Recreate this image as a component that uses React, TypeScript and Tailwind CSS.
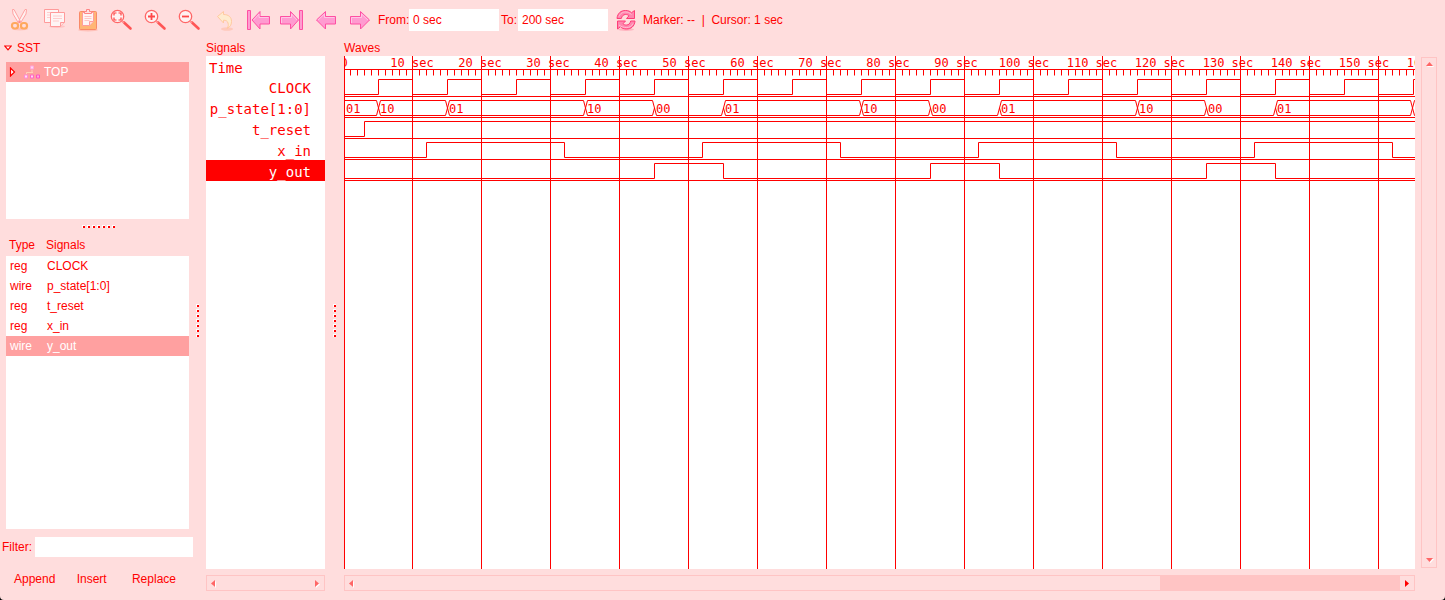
import type { ReactNode } from "react";

const RED = "#ff0000";

/* ---------- toolbar icons ---------- */

function Glyph({ children }: { children: ReactNode }) {
  return (
    <svg viewBox="0 0 24 24" className="size-6" fill="none" aria-hidden="true">
      {children}
    </svg>
  );
}

const Cut = () => (
  <Glyph>
    <ellipse cx="12" cy="21" rx="8" ry="1.5" fill="#ffc4bc" />
    <path d="M4.5 1.5L5 6l5.500 9 2-1.500L6 1.500zM18.500 1.500L18 6l-5.500 9-2-1.500L17 1.500z" fill="#fff2f0" stroke="#ffa3a3" strokeWidth="1" />
    <rect x="4" y="15" width="6" height="5.500" rx="2.500" stroke="#ffa95e" strokeWidth="2.200" />
    <rect x="13" y="15" width="6" height="5.500" rx="2.500" stroke="#ffa95e" strokeWidth="2.200" />
    <circle cx="11.500" cy="14" r="1" fill="#ff8a8a" />
  </Glyph>
);

const Copy = () => (
  <Glyph>
    <ellipse cx="15" cy="18.500" rx="8" ry="1.500" fill="#ffc4c4" />
    <path d="M2.500 1.500h14v13h-14z" fill="#fff5f5" stroke="#ff9a9a" />
    <path d="M5 4.500h8M5 7h4M5 9.500h4" stroke="#ffcccc" />
    <path d="M8.500 4.500h14v10l-4 4h-10z" fill="#fff5f5" stroke="#ff9a9a" />
    <path d="M22.500 14.500h-4v4" fill="#ffdcdc" stroke="#ff9a9a" />
    <path d="M11 8h9M11 10.500h9M11 13h6" stroke="#ffcccc" />
  </Glyph>
);

const Paste = () => (
  <Glyph>
    <ellipse cx="12" cy="22" rx="10" ry="1.500" fill="#ffc0b8" />
    <rect x="3.500" y="3.500" width="17" height="18" rx="1" fill="#ffb676" stroke="#f98a68" />
    <path d="M6.500 4.500h11v9l-4 4h-7z" fill="#fff4f4" stroke="#ff9c9c" />
    <path d="M17.500 13.500h-4v4" fill="#ffdada" stroke="#ff9c9c" />
    <path d="M8.500 8.500h7M8.500 10.500h7M8.500 12.500h5" stroke="#ffc6c6" />
    <path d="M8.500 5.500v-2h2v-2h3v2h2v2z" fill="#ffe0e0" stroke="#ff8585" />
  </Glyph>
);

function Zoom({ children }: { children: ReactNode }) {
  return (
    <Glyph>
      <path d="M14 14.500l6.500 6" stroke="#ff5555" strokeWidth="2.600" strokeLinecap="round" />
      <path d="M12 13.500l2 1.500" stroke="#ff8f8f" strokeWidth="1.500" />
      <circle cx="7.500" cy="8.500" r="6.200" fill="#fff1f1" stroke="#ff6666" strokeWidth="1.300" />
      {children}
    </Glyph>
  );
}

const ZoomFit = () => (
  <Zoom>
    <path d="M4 7.500V5h2.500M8.500 5H11v2.500M11 9.500V12H8.500M6.500 12H4V9.500" stroke="#ff4040" strokeWidth="1.200" />
  </Zoom>
);
const ZoomIn = () => (
  <Zoom>
    <path d="M4 8.500h7M7.500 5v7" stroke="#ff4848" strokeWidth="1.800" />
  </Zoom>
);
const ZoomOut = () => (
  <Zoom>
    <path d="M4 8.500h7" stroke="#ff4848" strokeWidth="1.800" />
  </Zoom>
);

const Undo = () => (
  <Glyph>
    <ellipse cx="15" cy="21" rx="6" ry="1.800" fill="#ffc9bc" />
    <path d="M5.500 8.500l6-5v3c5 0 8 2.500 8 7 0 3.500-1.500 5.500-4.500 7 1.500-2 1.500-3.500 1-5.500-.500-2-2-2.800-4.500-2.800v2.800z" fill="#ffebcf" stroke="#ffc9a0" strokeLinejoin="round" />
  </Glyph>
);

const pinkProps = { fill: "#ff9bd0", stroke: "#ff4fa3", strokeLinejoin: "round" as const };
const shine = "#ffc6e4";

const First = () => (
  <Glyph>
    <path d="M1.500 2.500h3v19h-3z" {...pinkProps} />
    <path d="M6 12l8-8.500v5h9.500v7.500H14v5z" {...pinkProps} />
    <path d="M7.500 12L13 6v3.500h9.500" stroke={shine} />
  </Glyph>
);
const Last = () => (
  <Glyph>
    <path d="M19.500 2.500h3v19h-3z" {...pinkProps} />
    <path d="M18.500 12l-8-8.500v5H.500v7.500h10v5z" {...pinkProps} />
    <path d="M1.500 15V9.500h10V6l5.500 6" stroke={shine} />
  </Glyph>
);
const Prev = () => (
  <Glyph>
    <path d="M2.500 12l9-8.500v5h10v7.500h-10v5z" {...pinkProps} />
    <path d="M4 12l6.500-6v3.500h10" stroke={shine} />
  </Glyph>
);
const Next = () => (
  <Glyph>
    <path d="M21.500 12l-9-8.500v5h-10v7.500h10v5z" {...pinkProps} />
    <path d="M3.500 15V9.500h10V6l6.500 6" stroke={shine} />
  </Glyph>
);
const Reload = () => (
  <Glyph>
    <ellipse cx="12" cy="21.500" rx="8" ry="1.500" fill="#ffb5c0" />
    <path d="M3 10.500C3.500 5 7 2.500 11.500 2.500c2.500 0 4.500.700 6 2.200L20.500 2.500v8H12.500l2.500-2.700c-1-1-2-1.300-3.500-1.300-2.300 0-3.500 1.500-4.200 4z" fill="#ff86ae" stroke="#ff3d78" strokeLinejoin="round" />
    <path d="M21 13c-.500 5.500-4 8-8.500 8-2.500 0-4.500-.700-6-2.200L3.500 21v-8h8L9 15.700c1 1 2 1.300 3.500 1.300 2.300 0 3.500-1.500 4.200-4z" fill="#ff86ae" stroke="#ff3d78" strokeLinejoin="round" />
    <path d="M5 8.500C6.500 5 9 4 11.500 4c2.500 0 4 .800 6 2.500M5 17c2.500 2 5 2.500 7.500 2.500 3 0 5-1 6.500-4" stroke="#ffbfd2" />
  </Glyph>
);

const TOOLS = [
  { label: "Cut", Icon: Cut },
  { label: "Copy", Icon: Copy },
  { label: "Paste", Icon: Paste },
  { label: "Zoom fit", Icon: ZoomFit },
  { label: "Zoom in", Icon: ZoomIn },
  { label: "Zoom out", Icon: ZoomOut },
  { label: "Undo zoom", Icon: Undo },
  { label: "Zoom to start", Icon: First },
  { label: "Zoom to end", Icon: Last },
  { label: "Previous edge", Icon: Prev },
  { label: "Next edge", Icon: Next },
];

function Toolbar() {
  return (
    <header className="flex h-10 shrink-0 items-center pl-[3px]">
      {TOOLS.map(({ label, Icon }) => (
        <button key={label} type="button" aria-label={label} className="flex h-10 w-[34px] shrink-0 items-center justify-center">
          <Icon />
        </button>
      ))}
      <label htmlFor="from" className="ml-px w-[31px] shrink-0 whitespace-nowrap">From:</label>
      <input id="from" defaultValue="0 sec" className="h-[22px] w-[90px] bg-white px-1 outline-none" />
      <label htmlFor="to" className="ml-0.5 w-[17px] shrink-0 whitespace-nowrap">To:</label>
      <input id="to" defaultValue="200 sec" className="h-[22px] w-[90px] bg-white px-1 outline-none" />
      <button type="button" aria-label="Reload" className="ml-1.5 flex shrink-0 items-center">
        <Reload />
      </button>
      <p className="ml-[5px] whitespace-pre">Marker: --  |  Cursor: 1 sec</p>
    </header>
  );
}

/* ---------- splitters and scrollbars ---------- */

function Dots({ vertical = false }: { vertical?: boolean }) {
  return (
    <div className={vertical ? "flex flex-col gap-0.5" : "flex gap-0.5"}>
      {Array.from({ length: 7 }, (_, i) => (
        <span key={i} className="size-[3px] border-t border-l border-white bg-[#ff0000]" />
      ))}
    </div>
  );
}

function Arrow({ dir, active = false }: { dir: "left" | "right" | "up" | "down"; active?: boolean }) {
  const paths = { left: "M6 1v7L2 4.500z", right: "M2 1v7l4-3.500z", up: "M1 6h7L4.500 2z", down: "M1 2h7L4.500 6z" };
  return (
    <svg viewBox="0 0 9 9" className="size-[9px]" aria-hidden="true">
      {!active && <path d={paths[dir]} fill="#fff" transform="translate(1 1)" />}
      <path d={paths[dir]} fill={active ? RED : "#ff6666"} />
    </svg>
  );
}

function HScroll({ name, thumb = false }: { name: string; thumb?: boolean }) {
  return (
    <div className="flex h-4 items-stretch border border-[#ffc4c4]">
      <button type="button" aria-label={`${name} left`} className="flex w-3 items-center justify-center">
        <Arrow dir="left" />
      </button>
      <div className="flex flex-1 justify-end">{thumb && <div className="w-[23%] bg-[#ffc4c4]" />}</div>
      <button type="button" aria-label={`${name} right`} className="flex w-3.5 items-center justify-center">
        <Arrow dir="right" active={thumb} />
      </button>
    </div>
  );
}

/* ---------- left panel ---------- */

const VARS = [
  ["reg", "CLOCK"],
  ["wire", "p_state[1:0]"],
  ["reg", "t_reset"],
  ["reg", "x_in"],
  ["wire", "y_out"],
];

function Sidebar() {
  return (
    <aside className="flex w-[193px] shrink-0 flex-col">
      <button type="button" className="flex h-4 items-center gap-[5px] pl-1">
        <svg viewBox="0 0 8 6" className="h-1.5 w-2" fill="#fff" stroke={RED} strokeWidth="1.200" aria-hidden="true">
          <path d="M.700 1h6.600L4 4.800z" />
        </svg>
        SST
      </button>
      <div className="mt-1.5 mr-1 ml-1.5 h-[157px] bg-white">
        <div className="flex h-5 items-center bg-[#ffa0a0] pl-[3px] text-white">
          <svg viewBox="0 0 8 10" className="h-2.5 w-2" fill="#fff" stroke={RED} strokeWidth="1.200" aria-hidden="true">
            <path d="M1.500 1v8l4-4z" />
          </svg>
          <svg viewBox="0 0 16 14" className="mr-1 ml-[7px] h-3.5 w-4" aria-hidden="true">
            <path d="M8 5v2M2.500 9V7.500H9" stroke="#ffd0b8" fill="none" />
            <path d="M6.500 1h3v3h-3z" fill="#ffd8f0" stroke="#ffa4dc" />
            <path d="M.500 10h3v3h-3z" fill="#ffe0f6" stroke="#ff8ad8" />
            <path d="M6.500 10h3v3h-3z" fill="#ffd8f2" stroke="#ff66c8" />
            <path d="M12.500 10h3v3h-3z" fill="#ffa6e2" stroke="#ff52c0" />
          </svg>
          TOP
        </div>
      </div>
      <div className="flex h-[15px] items-center justify-center pl-1">
        <Dots />
      </div>
      <div className="mr-1 ml-1.5 flex min-h-0 flex-1 flex-col">
        <table className="w-full table-fixed border-collapse text-left">
          <colgroup>
            <col className="w-[38px]" />
            <col />
          </colgroup>
          <thead>
            <tr className="h-[22px]">
              <th className="p-0 pl-[3px] font-normal">Type</th>
              <th className="p-0 pl-0.5 font-normal">Signals</th>
            </tr>
          </thead>
          <tbody className="bg-white">
            {VARS.map(([type, name]) => (
              <tr key={name} className={name === "y_out" ? "h-5 bg-[#ffa0a0] text-white" : "h-5"}>
                <td className="p-0 pl-1">{type}</td>
                <td className="p-0 pl-[3px]">{name}</td>
              </tr>
            ))}
          </tbody>
        </table>
        <div className="flex-1 bg-white" />
      </div>
      <div className="mt-2 flex h-5 items-center pl-0.5">
        <label htmlFor="filter" className="w-[33px] shrink-0">Filter:</label>
        <input id="filter" className="h-5 min-w-0 flex-1 bg-white px-1 outline-none" />
      </div>
      <div className="mt-3 mb-[11px] flex h-5 items-center justify-between pr-[17px] pl-3.5">
        <button type="button">Append</button>
        <button type="button" className="mr-1">Insert</button>
        <button type="button">Replace</button>
      </div>
    </aside>
  );
}

/* ---------- signal names ---------- */

const SIGNALS = ["CLOCK", "p_state[1:0]", "t_reset", "x_in", "y_out"];

function SignalNames() {
  return (
    <section className="flex w-[119px] shrink-0 flex-col pb-[9px]">
      <h2 className="h-4 leading-4">Signals</h2>
      <div className="mb-1.5 flex-1 bg-white font-['DejaVu_Sans_Mono',monospace] text-sm">
        <div className="h-5 pl-[3px] leading-6">Time</div>
        <ul>
          {SIGNALS.map((s) => (
            <li
              key={s}
              className={
                s === "y_out"
                  ? "h-[21px] bg-[#ff0000] pr-3.5 text-right leading-6 text-white"
                  : "h-[21px] pr-3.5 text-right leading-6"
              }
            >
              {s}
            </li>
          ))}
        </ul>
      </div>
      <HScroll name="Scroll signals" />
    </section>
  );
}

/* ---------- waveforms ---------- */

const END = 4000;
const COUNT = 60;
const LABELS = 17;
const at = (sec: number) => (sec === 0 ? 0 : Math.floor(sec * 6.9) - (sec % 10 === 0 ? 1 : 0));

function squarePath(edges: number[], y: number, startHigh = false) {
  let high = startHigh;
  let d = `M0 ${high ? y : y + 15}`;
  for (const x of edges) {
    d += `H${x}`;
    high = !high;
    d += `V${high ? y : y + 15}`;
  }
  return d + `H${END}`;
}

const CLOCK_EDGES = Array.from({ length: COUNT }, (_, k) => [34 + 69 * k, 68 + 69 * k]).flat();
const X_EDGES = Array.from({ length: 12 }, (_, k) => 82 + 138 * k);
const Y_EDGES = [310, 379, 586, 655, 862, 931];

const BUS: [number, string][] = [
  [0, "01"],
  [34, "10"],
  [103, "01"],
  [241, "10"],
  [310, "00"],
  [379, "01"],
  [517, "10"],
  [586, "00"],
  [655, "01"],
  [793, "10"],
  [862, "00"],
  [931, "01"],
  [1068, "10"],
];

const TOP = 44;
const BOTTOM = 59;

function busPath() {
  let d = "";
  BUS.forEach(([x, v], i) => {
    const next = i + 1 < BUS.length ? BUS[i + 1][0] : END;
    const from = i === 0 ? x : x + 2;
    d += `M${from} ${BOTTOM}H${next - 2}`;
    if (v !== "00") d += `M${from} ${TOP}H${next - 2}`;
  });
  return d;
}

function crossingPath() {
  let d = "";
  for (let i = 1; i < BUS.length; i++) {
    const x = BUS[i][0];
    const mid = (TOP + BOTTOM) / 2;
    const fromZero = BUS[i - 1][1] === "00";
    const toZero = BUS[i][1] === "00";
    d += fromZero ? `M${x} ${mid}L${x + 2} ${BOTTOM}` : `M${x - 2} ${TOP}L${x + 2} ${BOTTOM}`;
    d += toZero ? `M${x} ${mid}L${x - 2} ${BOTTOM}` : `M${x + 2} ${TOP}L${x - 2} ${BOTTOM}`;
  }
  return d;
}

function WaveCanvas() {
  const ticks = Array.from({ length: 400 }, (_, i) => `M${at(i)} 13v6`).join("");
  const rules = [40, 61, 82, 103, 124].map((y) => `M0 ${y}H${END}`).join("");
  return (
    <svg className="block h-0 min-h-full w-full overflow-hidden bg-white" role="img" aria-label="Waveforms">
      <g transform="translate(0.5 0.5)" stroke={RED} fill="none" strokeWidth="1">
        <path d={`M0 13H${END}`} />
        <path d={ticks} />
        <path d={rules} />
        <path d={squarePath(CLOCK_EDGES, 23)} />
        <path d={busPath()} />
        <path d={crossingPath()} />
        <path d={squarePath([20], 65)} />
        <path d={squarePath(X_EDGES, 86)} />
        <path d={squarePath(Y_EDGES, 107)} />
        {Array.from({ length: COUNT }, (_, k) => (
          <line key={k} x1={at(k * 10)} x2={at(k * 10)} y1="-1" y2="100%" />
        ))}
      </g>
      <g fill={RED} className="font-['DejaVu_Sans_Mono',monospace] text-xs">
        {Array.from({ length: LABELS }, (_, k) => (
          <text key={k} x={68 * k} y="11" textAnchor="middle">
            {k === 0 ? "0" : `${k * 10} sec`}
          </text>
        ))}
        {BUS.slice(0, -1).map(([x, v]) => (
          <text key={x} x={x + 2} y="57">
            {v}
          </text>
        ))}
      </g>
    </svg>
  );
}

function Waves() {
  return (
    <section className="flex min-w-0 flex-1 flex-col pb-[9px]">
      <h2 className="h-4 leading-4">Waves</h2>
      <div className="mb-1.5 flex-1">
        <WaveCanvas />
      </div>
      <HScroll name="Scroll waves" thumb />
    </section>
  );
}

export default function App() {
  return (
    <div className="bg-black">
      <div className="flex h-screen min-h-[420px] flex-col overflow-hidden rounded-b-[4px] bg-[#ffdddd] font-['Liberation_Sans',Arial,sans-serif] text-xs text-[#ff0000]">
        <Toolbar />
        <main className="flex min-h-0 flex-1">
          <Sidebar />
          <div className="flex w-[13px] shrink-0 items-center justify-center pr-[5px]">
            <Dots vertical />
          </div>
          <SignalNames />
          <div className="flex w-[19px] shrink-0 items-center justify-center">
            <Dots vertical />
          </div>
          <Waves />
          <div className="mt-[17px] mr-2 mb-8 ml-1.5 flex w-4 shrink-0 flex-col items-stretch justify-between border border-[#ffc4c4]">
            <button type="button" aria-label="Scroll up" className="flex h-3 items-center justify-center">
              <Arrow dir="up" />
            </button>
            <button type="button" aria-label="Scroll down" className="flex h-3.5 items-center justify-center">
              <Arrow dir="down" />
            </button>
          </div>
        </main>
      </div>
    </div>
  );
}
